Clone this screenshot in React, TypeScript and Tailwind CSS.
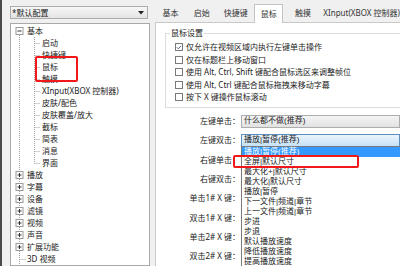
import { Check } from "lucide-react"

const childItems = [
  "启动",
  "快捷键",
  "鼠标",
  "触摸",
  "XInput(XBOX 控制器)",
  "皮肤/配色",
  "皮肤覆盖/放大",
  "截标",
  "简表",
  "消息",
  "界面",
]

const rootItems = ["播放", "字幕", "设备", "滤镜", "视频", "声音", "扩展功能"]

const checks = [
  { label: "仅允许在视频区域内执行左键单击操作", on: true },
  { label: "仅在标题栏上移动窗口", on: false },
  { label: "使用 Alt, Ctrl, Shift 键配合鼠标选区来调整帧位", on: false },
  { label: "使用 Alt, Ctrl 键配合鼠标拖拽来移动字幕", on: false },
  { label: "按下 X 键操作鼠标滚动", on: false },
]

const labels = [
  "左键单击：",
  "左键双击：",
  "右键单击：",
  "右键双击：",
  "单击1# X 键：",
  "双击1# X 键：",
  "单击2# X 键：",
  "双击2# X 键：",
]

const options = [
  "播放|暂停(推荐)",
  "全屏|默认尺寸",
  "最大化+|默认尺寸",
  "最大化|默认尺寸",
  "播放|暂停",
  "下一文件|频道|章节",
  "上一文件|频道|章节",
  "步进",
  "步退",
  "默认播放速度",
  "降低播放速度",
  "提高播放速度",
]

const tabs = [
  { name: "基本", w: "w-[32px]" },
  { name: "启始", w: "w-[32px]" },
  { name: "快捷键", w: "w-[38px]" },
  { name: "鼠标", w: "w-[30px]", active: true },
  { name: "触摸", w: "w-[40px]" },
]

// tree connector for the root column
function RootLine({ box, first }: { box?: "minus" | "plus"; first?: boolean }) {
  return (
    <svg width="16" height="12" className="shrink-0">
      <line x1="8.5" y1={first ? 6 : 0} x2="8.5" y2="12" stroke="#a0a0a0" strokeDasharray="1 1" />
      {box ? (
        <>
          <rect x="5" y="2.5" width="7" height="7" fill="#fff" stroke="#9a9a9a" />
          <line x1="6.5" y1="6" x2="10.5" y2="6" stroke="#333" />
          {box === "plus" && <line x1="8.5" y1="4" x2="8.5" y2="8" stroke="#333" />}
        </>
      ) : null}
    </svg>
  )
}

function StubLine() {
  return (
    <svg width="16" height="12" className="shrink-0">
      <line x1="8.5" y1="0" x2="8.5" y2="12" stroke="#a0a0a0" strokeDasharray="1 1" />
      <line x1="8.5" y1="6.5" x2="15" y2="6.5" stroke="#a0a0a0" strokeDasharray="1 1" />
    </svg>
  )
}

function ChildLine({ last }: { last?: boolean }) {
  return (
    <svg width="15" height="12" className="shrink-0">
      <line x1="7.5" y1="0" x2="7.5" y2={last ? 6.5 : 12} stroke="#a0a0a0" strokeDasharray="1 1" />
      <line x1="7.5" y1="6.5" x2="13" y2="6.5" stroke="#a0a0a0" strokeDasharray="1 1" />
    </svg>
  )
}

export default function App() {
  return (
    <div className="flex h-[266px] w-[400px] overflow-hidden bg-[#f0f0f0] font-['Noto_Sans','Noto_Sans_CJK_SC',sans-serif] text-[8px] leading-none text-[#222]">
      <div className="w-[2px] shrink-0 bg-[#4a4a4a]" />

      {/* left column */}
      <div className="flex w-[148px] shrink-0 flex-col pl-[8px] pt-[6px]">
        <div className="flex h-[15px] w-[138px] items-center justify-between border border-[#acacac] bg-gradient-to-b from-[#f7f7f7] to-[#e4e4e4] pl-[1px] pr-[3px]">
          <span>*默认配置</span>
          <svg width="6" height="4">
            <polygon points="0,0 6,0 3,3.5" fill="#222" />
          </svg>
        </div>

        <div className="relative mt-[4px] flex w-[140px] flex-1 flex-col border border-[#a9a9a9] bg-white pt-[1px] leading-[12px]">
          <div className="flex h-[12px] items-center">
            <RootLine box="minus" first />
            <span>基本</span>
          </div>
          {childItems.map((item, i) => (
            <div key={item} className="flex h-[12px] items-center">
              <RootLine />
              <ChildLine last={i === childItems.length - 1} />
              <span className="whitespace-nowrap">{item}</span>
            </div>
          ))}
          {rootItems.map((item) => (
            <div key={item} className="flex h-[12px] items-center">
              <RootLine box="plus" />
              <span>{item}</span>
            </div>
          ))}
          <div className="flex h-[12px] items-center">
            <StubLine />
            <span>3D 视频</span>
          </div>

          <div className="absolute left-[24px] top-[32px] h-[26px] w-[43px] rounded-[2px] border-2 border-[#f01818]" />
        </div>
      </div>

      {/* right column */}
      <div className="ml-[5px] flex min-w-0 flex-1 flex-col">
        <div className="flex h-[22px] shrink-0 items-end text-[#333]">
          {tabs.map((t) =>
            t.active ? (
              <div
                key={t.name}
                className={`relative z-10 mb-[-1px] flex h-[19px] ${t.w} items-center justify-center border border-b-0 border-[#c4c4c4] bg-white`}
              >
                {t.name}
              </div>
            ) : (
              <div key={t.name} className={`flex h-[18px] ${t.w} items-center justify-center`}>
                {t.name}
              </div>
            )
          )}
          <div className="flex h-[18px] items-center whitespace-nowrap pl-[1px]">XInput(XBOX 控制器)</div>
        </div>

        <div className="flex flex-1 flex-col overflow-hidden border-l border-t border-[#c9c9c9] bg-white">
          <div className="relative ml-[9px] mt-[10px] w-[300px] shrink-0 border border-[#dcdcdc] pb-[3px] pl-[9px] pt-[7px]">
            <span className="absolute left-[4px] top-[-5px] bg-white px-[1px]">鼠标设置</span>
            {checks.map((c) => (
              <div key={c.label} className="flex h-[12.5px] items-center gap-[3px] whitespace-nowrap">
                <div className="flex h-[8px] w-[8px] items-center justify-center border border-[#7a7a7a] bg-white">
                  {c.on && <Check size={7} strokeWidth={3} color="#1f3b6b" />}
                </div>
                <span>{c.label}</span>
              </div>
            ))}
          </div>

          <div className="mt-[4px] flex flex-col">
            {labels.map((l, i) => (
              <div key={l} className="flex h-[19.3px] shrink-0 items-center">
                <span className="w-[84px] shrink-0 whitespace-nowrap text-right">{l}</span>
                {i === 0 && (
                  <div className="ml-[1px] flex h-[13px] w-[200px] items-center border border-[#adadad] bg-gradient-to-b from-[#f4f4f4] to-[#e2e2e2] pl-[2px] font-['Liberation_Sans','Noto_Sans_CJK_SC',sans-serif]">
                    什么都不做(推荐)
                  </div>
                )}
                {i === 1 && (
                  <div className="relative z-20 ml-[1px] flex h-[13px] w-[200px] items-center border border-[#5b8fc0] bg-gradient-to-b from-[#eaf5fd] to-[#c6e2f7] pl-[2px] font-['Liberation_Sans','Noto_Sans_CJK_SC',sans-serif]">
                    播放|暂停(推荐)
                    <div className="absolute left-[-1px] top-full w-[180px] border border-[#7a7a7a] bg-white">
                      {options.map((o, k) => (
                        <div
                          key={o}
                          className={`h-[10px] whitespace-nowrap pl-[2px] leading-[10px] ${k === 0 ? "bg-[#3399ff] text-white" : ""}`}
                        >
                          {o}
                        </div>
                      ))}
                      <div className="absolute left-[-9px] top-[8px] h-[13px] w-[126px] rounded-[2px] border-2 border-[#f01818]" />
                    </div>
                  </div>
                )}
              </div>
            ))}
          </div>
        </div>
      </div>
    </div>
  )
}
